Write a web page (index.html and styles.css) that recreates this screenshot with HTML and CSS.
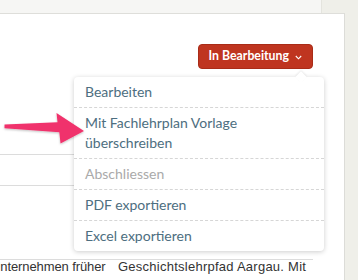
FILE: index.html
```html
<!DOCTYPE html>
<html lang="de">
<head>
<meta charset="utf-8">
<link rel="stylesheet" href="styles.css">
</head>
<body>
<div class="topbar"></div>
<div class="card">
  <div class="header">
    <button class="status">In Bearbeitung
      <svg class="chev" width="7" height="5" viewBox="0 0 7 5"><path d="M0.8 1 L3.5 3.8 L6.2 1" fill="none" stroke="#fff" stroke-width="1.1"/></svg>
    </button>
  </div>
  <div class="row r1"></div>
  <div class="row r2"></div>
  <div class="row r3"></div>
  <div class="textrow">
    <span class="c1">Unternehmen früher</span>
    <span class="c2">Geschichtslehrpfad Aargau. Mit</span>
  </div>

  <ul class="menu">
    <li>Bearbeiten</li>
    <li>Mit Fachlehrplan Vorlage<br>überschreiben</li>
    <li class="disabled">Abschliessen</li>
    <li>PDF exportieren</li>
    <li>Excel exportieren</li>
  </ul>
</div>
<svg class="pointer" width="92" height="48" viewBox="0 104 92 48">
  <defs>
    <filter id="sh" x="-10%" y="-20%" width="130%" height="150%">
      <feDropShadow dx="0" dy="1" stdDeviation="0.8" flood-color="#000" flood-opacity="0.25"/>
    </filter>
  </defs>
  <path d="M4.5 124.6 L57.5 122.3 L56.5 113 L84 131 L60.5 143.5 L59.3 132.3 L4.5 128.2 Z" fill="#f0336c" filter="url(#sh)"/>
</svg>
</body>
</html>
```

FILE: styles.css
```css
html, body {
  margin: 0;
  padding: 0;
}
body {
  background: #efefe9;
  width: 358px;
  height: 280px;
  overflow: hidden;
  position: relative;
  font-family: Lato, "Open Sans", sans-serif;
}
.topbar {
  width: 322px;
  height: 13px;
  background: #f6f6f4;
  border-right: 1px solid #e4e4de;
  box-sizing: border-box;
}
.card {
  position: relative;
  width: 345px;
  height: 267px;
  background: #fff;
  border-top: 1px solid #dededa;
  border-right: 1px solid #dcdcd8;
  box-sizing: border-box;
  overflow: hidden;
}
.header {
  display: flex;
  justify-content: flex-end;
  padding: 30px 31px 0 0;
}
.status {
  display: flex;
  align-items: center;
  gap: 6px;
  height: 25px;
  padding: 0 10px 0 10px;
  background: #bf3520;
  border: 1px solid #a92c18;
  border-radius: 4px;
  color: #fff;
  font-family: Lato, sans-serif;
  font-weight: 700;
  font-size: 12.3px;
  line-height: 1;
  box-sizing: border-box;
}
.chev {
  margin-top: 1px;
}
.row {
  width: 313px;
  border-bottom: 1px solid #dcdcdc;
}
.r1 { height: 85px; }
.r2 { height: 30px; }
.r3 { height: 73px; }
.textrow {
  display: grid;
  grid-template-columns: 118px 1fr;
  font-family: "Liberation Sans", Arial, sans-serif;
  font-size: 13px;
  color: #333;
  line-height: 14px;
}
.c1 {
  margin-left: -9px;
  white-space: nowrap;
  letter-spacing: -0.1px;
}
.c2 {
  white-space: nowrap;
  letter-spacing: 0.25px;
}
.menu {
  position: absolute;
  left: 74px;
  top: 63px;
  width: 250px;
  margin: 0;
  padding: 0;
  list-style: none;
  background: #fff;
  border-radius: 4px;
  box-shadow: 0 1px 5px rgba(0, 0, 0, 0.2);
}
.menu::before {
  content: "";
  position: absolute;
  top: -4px;
  left: 223px;
  width: 8px;
  height: 8px;
  background: #fff;
  transform: rotate(45deg);
  box-shadow: -1px -1px 2px rgba(0, 0, 0, 0.08);
}
.menu li {
  position: relative;
  padding: 5px 11px;
  font-size: 14px;
  line-height: 20px;
  color: #4d6e80;
}
.menu li + li {
  border-top: 1px dashed #d6d6d6;
}
.menu li.disabled {
  color: #aaaaaa;
}
.pointer {
  position: absolute;
  left: 0;
  top: 104px;
}
```
